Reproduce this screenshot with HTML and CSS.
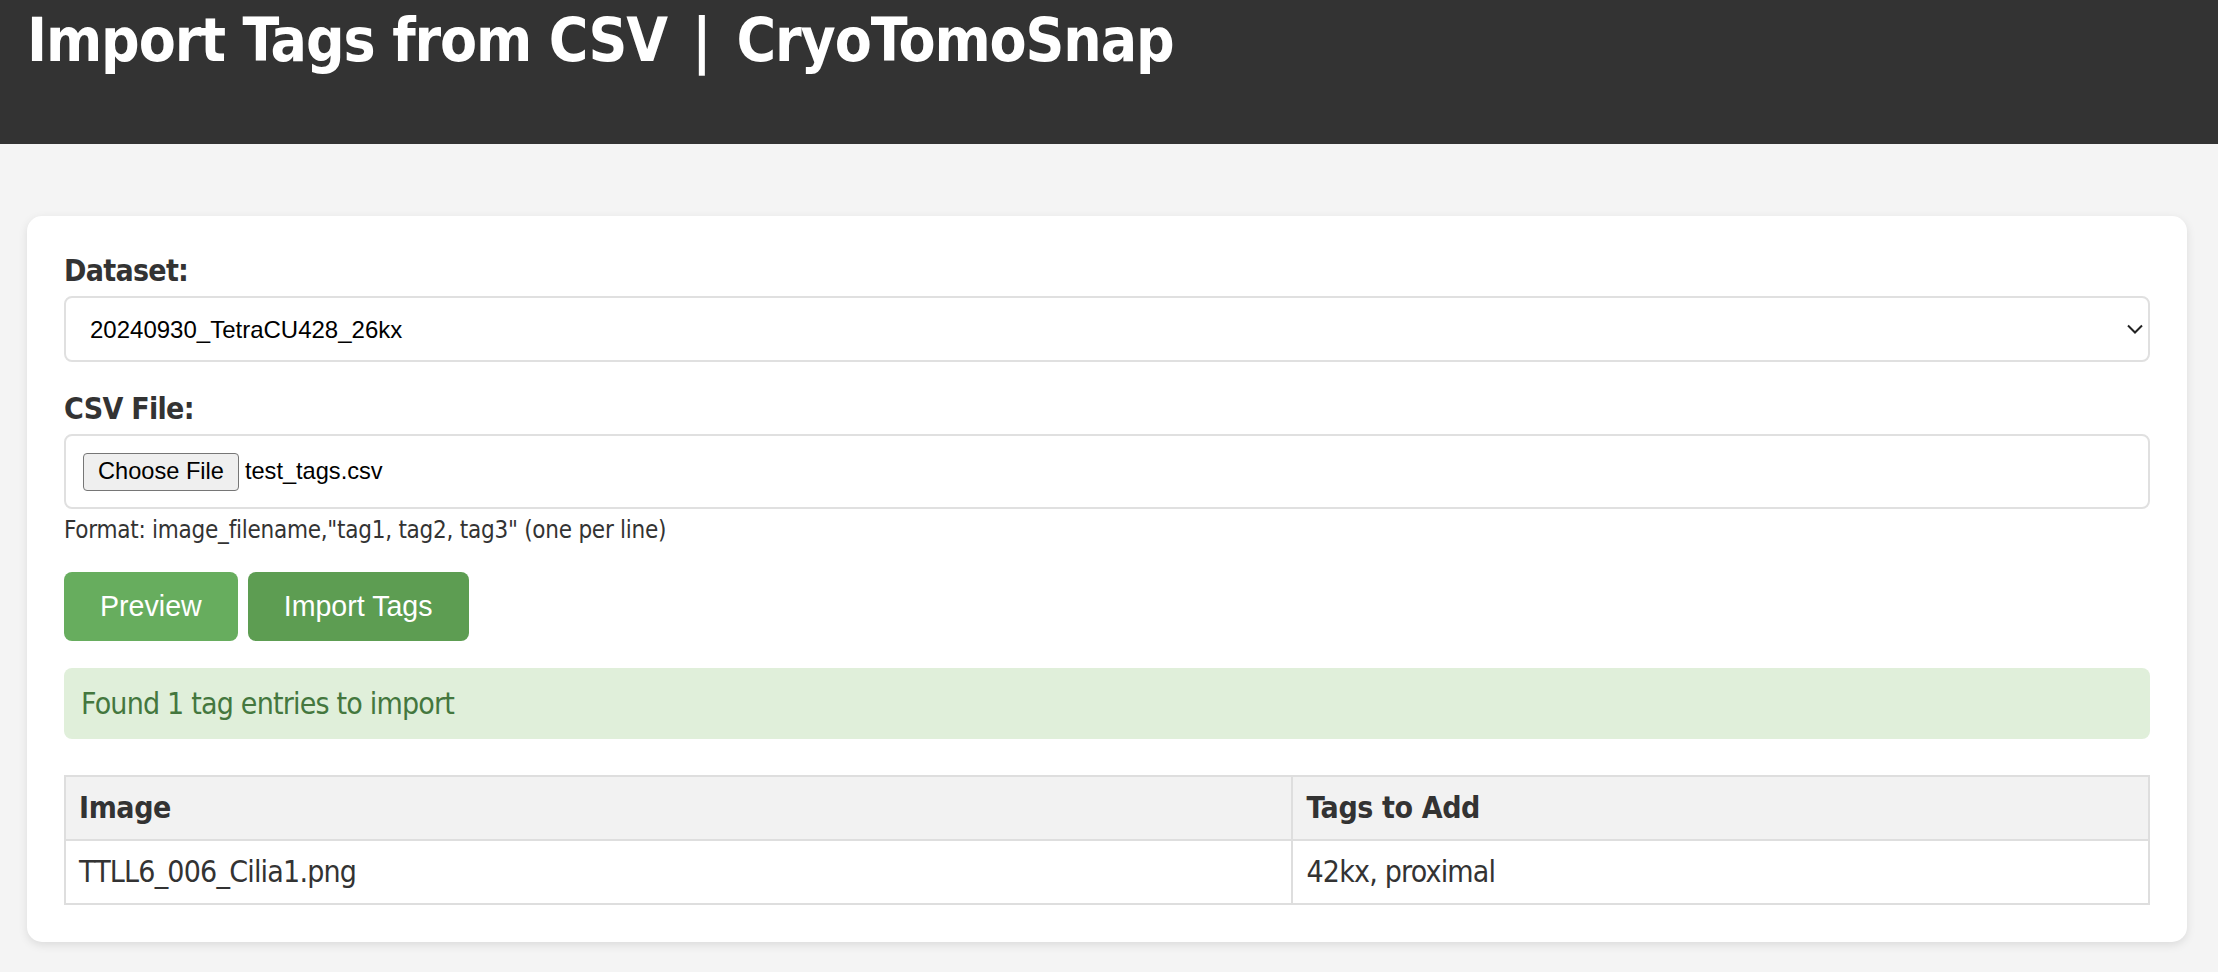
FILE: index.html
```html
<!DOCTYPE html>
<html lang="en">
<head>
<meta charset="utf-8">
<title>Import Tags from CSV | CryoTomoSnap</title>
<link rel="stylesheet" href="styles.css">
</head>
<body>
<header class="topbar">
  <h1 class="title">Import Tags from CSV<span class="sep">|</span>CryoTomoSnap</h1>
</header>
<main class="page">
  <section class="card">
    <div class="form-group">
      <label class="field-label" for="dataset">Dataset:</label>
      <div class="select-wrap">
        <select id="dataset" class="select">
          <option>20240930_TetraCU428_26kx</option>
        </select>
        <svg class="chevron" width="16" height="10" viewBox="0 0 16 10" aria-hidden="true">
          <path d="M1 1.5 L8 8.5 L15 1.5" fill="none" stroke="#222" stroke-width="2"/>
        </svg>
      </div>
    </div>
    <div class="form-group form-group-file">
      <label class="field-label">CSV File:</label>
      <div class="file-box">
        <span class="file-btn">Choose File</span>
        <span class="file-name">test_tags.csv</span>
      </div>
      <div class="help">Format: image_filename,"tag1, tag2, tag3" (one per line)</div>
    </div>
    <div class="actions">
      <button class="btn btn-preview">Preview</button>
      <button class="btn btn-import">Import Tags</button>
    </div>
    <div class="alert">Found 1 tag entries to import</div>
    <table class="preview-table">
      <thead>
        <tr><th class="col-image">Image</th><th>Tags to Add</th></tr>
      </thead>
      <tbody>
        <tr><td>TTLL6_006_Cilia1.png</td><td>42kx, proximal</td></tr>
      </tbody>
    </table>
  </section>
</main>
</body>
</html>
```
FILE: styles.css
```css
html, body {
  margin: 0;
  padding: 0;
}
body {
  background: #f4f4f4;
  color: #333;
  font-family: "DejaVu Sans Condensed", "DejaVu Sans", sans-serif;
  font-stretch: condensed;
  font-size: 30px;
}
.topbar {
  background: #333;
  height: 144px;
  box-sizing: border-box;
  padding: 4px 27px 0 27px;
}
.title {
  margin: 0;
  color: #fff;
  font-size: 60px;
  line-height: 72px;
  font-weight: bold;
  letter-spacing: -1.1px;
  white-space: nowrap;
}
.sep {
  margin: 0 26px 0 25px;
}
.page {
  padding: 72px 31px 40px 27px;
}
.card {
  background: #fff;
  border-radius: 15px;
  padding: 37px;
  box-shadow: 0 3px 10px rgba(0, 0, 0, 0.1);
}
.form-group {
  margin-bottom: 29px;
}
.field-label {
  display: block;
  font-weight: bold;
  font-size: 30px;
  line-height: 36px;
  letter-spacing: -0.7px;
  margin-bottom: 7px;
}
.select-wrap {
  position: relative;
}
.select {
  display: block;
  width: 100%;
  height: 66px;
  box-sizing: border-box;
  border: 2px solid #e0e0e0;
  border-radius: 8px;
  background: #fff;
  padding: 0 50px 0 24px;
  font-family: "Liberation Sans", Arial, sans-serif;
  font-size: 24px;
  color: #000;
  appearance: none;
  -webkit-appearance: none;
}
.chevron {
  position: absolute;
  right: 7px;
  top: 28px;
}
.file-box {
  display: flex;
  align-items: center;
  height: 75px;
  box-sizing: border-box;
  border: 2px solid #e0e0e0;
  border-radius: 8px;
  padding: 0 17px;
  font-family: "Liberation Sans", Arial, sans-serif;
  font-size: 23.6px;
  color: #000;
}
.file-btn {
  display: inline-flex;
  align-items: center;
  height: 38px;
  box-sizing: border-box;
  padding: 0 14px;
  border: 1px solid #767676;
  border-radius: 4px;
  background: #efefef;
}
.file-name {
  margin-left: 6px;
}
.help {
  margin-top: 7px;
  font-size: 24px;
  line-height: 29px;
  letter-spacing: -0.25px;
  color: #333;
}
.form-group-file {
  margin-bottom: 27px;
}
.actions {
  display: flex;
  gap: 10px;
}
.btn {
  height: 69px;
  border: none;
  border-radius: 8px;
  padding: 0 36px;
  color: #fff;
  font-family: "Liberation Sans", Arial, sans-serif;
  font-size: 28.6px;
}
.btn-preview {
  background: #67ad5e;
}
.btn-import {
  background: #5d9d52;
}
.alert {
  margin-top: 27px;
  background: #e0efda;
  color: #44773e;
  border-radius: 8px;
  padding: 18px 17px;
  line-height: 35px;
  font-size: 30px;
  letter-spacing: -0.8px;
}
.preview-table {
  margin-top: 36px;
  width: 100%;
  border-collapse: collapse;
  font-size: 30px;
}
.preview-table th,
.preview-table td {
  border: 2px solid #dedede;
  padding: 15px 13px;
  line-height: 32px;
  text-align: left;
}
.preview-table th {
  background: #f2f2f2;
  font-weight: bold;
  letter-spacing: -0.4px;
}
.preview-table td {
  letter-spacing: -0.8px;
}
.col-image {
  width: 58.9%;
}
```
